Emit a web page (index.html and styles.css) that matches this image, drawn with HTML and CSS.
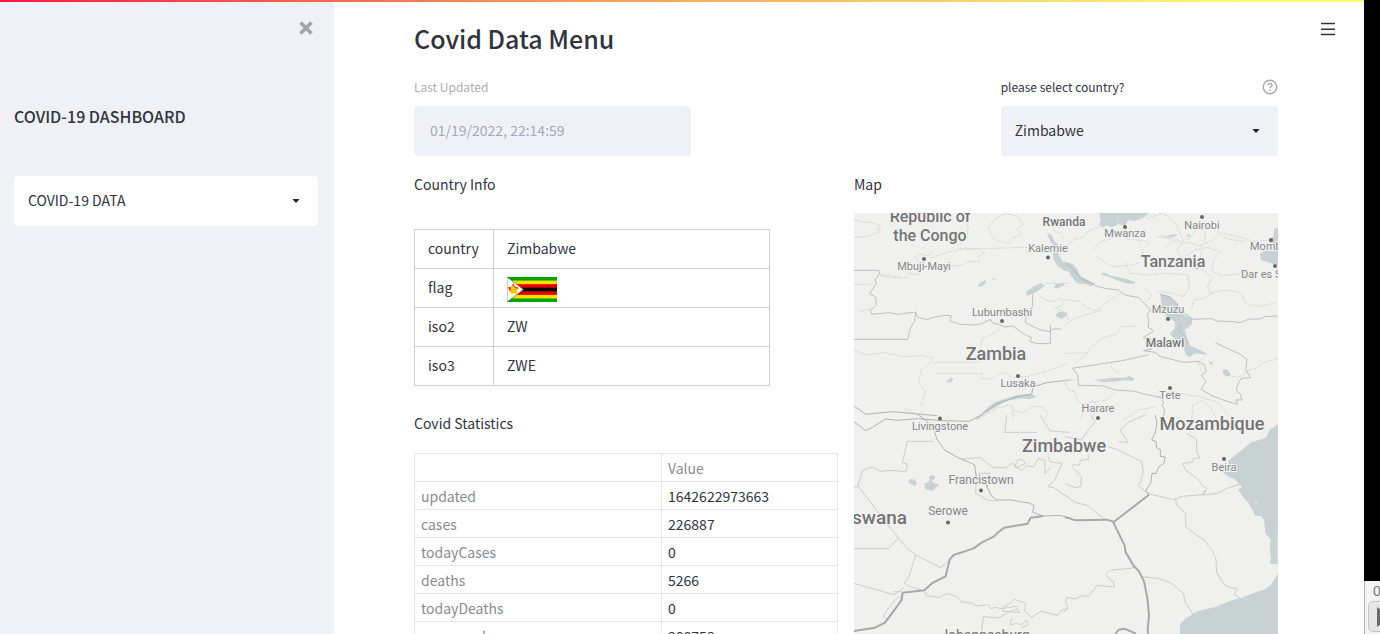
FILE: index.html
```html
<!DOCTYPE html>
<html lang="en">
<head>
<meta charset="utf-8">
<title>Covid Data Menu</title>
<link rel="stylesheet" href="styles.css">
</head>
<body>
<div class="shell">
  <div class="app">
    <div class="rainbow"></div>
    <aside class="sidebar">
      <button class="close" aria-label="Close sidebar"><svg width="14" height="14" viewBox="0 0 14 14"><path d="M1.500 1.500l11 11M12.500 1.500l-11 11" stroke="#a4a5aa" stroke-width="3.600" fill="none"/></svg></button>
      <h1 class="brand">COVID-19 DASHBOARD</h1>
      <div class="select select-light">
        <select aria-label="Dashboard page"><option>COVID-19 DATA</option></select>
        <svg class="caret" width="8" height="4" viewBox="0 0 8 4"><path d="M.5 0h7L5 3.200Q4 4 3 3.200z" fill="#262730"/></svg>
      </div>
    </aside>
    <main class="main">
      <button class="menu" aria-label="Menu"><svg width="14" height="14" viewBox="0 0 14 14"><path d="M0 1.500h14M0 7.200h14M0 12.500h14" stroke="#31333f" stroke-width="1.600"/></svg></button>
      <h2 class="title">Covid Data Menu</h2>
      <div class="fields">
        <div class="field">
          <label class="label muted" for="updated">Last Updated</label>
          <input class="input" id="updated" type="text" value="01/19/2022, 22:14:59" disabled>
        </div>
        <div class="field field-end">
          <div class="label-row">
            <label class="label" for="country">please select country?</label>
            <svg width="16" height="16" viewBox="0 0 16 16" fill="none" stroke="#a9aab0" stroke-width="1.400"><circle cx="8" cy="8" r="6.800"/><path d="M6 6.300c.2-2.400 4-2.300 4 0 0 1.500-2 1.400-2 3"/><path d="M8 10.600v1.500" stroke-width="1.500"/></svg>
          </div>
          <div class="select">
            <select id="country"><option>Zimbabwe</option></select>
            <svg class="caret" width="8" height="4" viewBox="0 0 8 4"><path d="M.5 0h7L5 3.200Q4 4 3 3.200z" fill="#262730"/></svg>
          </div>
        </div>
      </div>
      <div class="columns">
        <section>
          <p class="heading">Country Info</p>
          <table class="info">
            <tbody>
              <tr><td>country</td><td>Zimbabwe</td></tr>
              <tr><td>flag</td><td><svg class="flag" width="50" height="25" viewBox="0 0 50 25">
                <rect width="50" height="25" fill="#00a400"/><rect y="3.570" width="50" height="17.860" fill="#ffe000"/><rect y="7.140" width="50" height="10.720" fill="#e50000"/><rect y="10.700" width="50" height="3.600" fill="#000"/>
                <path d="M0 0L16.500 12.500 0 25z" fill="#fff" stroke="#555" stroke-width=".6"/>
                <path d="M6 6l2 3.500 4 1.500-3 2.400-6 1L1 10.200l4-.2z" fill="#e52020"/>
                <path d="M4 9.500l2.500-1 2 2.700h3l-1.500 2v3.300H3.500l-.2-3z" fill="#edc900"/></svg></td></tr>
              <tr><td>iso2</td><td>ZW</td></tr>
              <tr><td>iso3</td><td>ZWE</td></tr>
            </tbody>
          </table>
          <p class="heading">Covid Statistics</p>
          <table class="stats">
            <thead><tr><th></th><th>Value</th></tr></thead>
            <tbody>
              <tr><th>updated</th><td>1642622973663</td></tr>
              <tr><th>cases</th><td>226887</td></tr>
              <tr><th>todayCases</th><td>0</td></tr>
              <tr><th>deaths</th><td>5266</td></tr>
              <tr><th>todayDeaths</th><td>0</td></tr>
              <tr><th>recovered</th><td>208753</td></tr>
            </tbody>
          </table>
        </section>
        <section>
          <p class="heading">Map</p>
          <svg class="map" viewBox="0 0 424 424" role="img" aria-label="Map of southern Africa">
            <rect width="424" height="424" fill="#f0f0ef"/>
            <g transform="translate(-4 -8) scale(.33333)">
              <path class="water" d="M590 85l14 4 10 20 10 8 2 30 10 20 14 10 14 4v20l-20-4-22-15-12-20-2-20 3-20-11-15zM528 262l20-16 25-12 12 8-15 12-22 12-18 6zM612 247l8-12 22-2v8l-22 10zM615 332l12-12 22 0 2 12-16 10zM382 243l12-12 12-6 2 8-14 12zM428 220l6 0 0 5-6 0zM289 530l14-12 7 2-5 10-14 4zM410 610l25-20 28-8 40-12 40-4 16 10-20 6-30-2-40 8-35 20-28 17-10 2z"/>
              <path class="faint" d="M12 45l20 5 30 2 30 10-5 20 6 10M12 98l40-4 25-10 10-22M325 130h110l90-3h45M90 213l45 5 35 0 8-15 30 8-10-20 15-15-20-20 15-8 30 4 5-12M90 208l60 8M240 160l60-20 40-7 50-2 10 15-15 10 5 12-40 3-20 12-40-2-4 17M335 25l20 40-5 35-25 20M440 38l25-12 40 8 15 25-18 14 15 16-30 10-10 16-35-8-15-10-12-30 25-30M12 238h50M30 320l35-10M12 435l40 15 50-7 60 12 50-3 35 5-5 15-30 25-5 40 20 20-5 20-10 25M250 472h100l40-2 15-20-15-20 8-30 25-10 25-18M260 505h135l0 15 30 3 20-15 15-5 30 15 40-3 30-8 50-15 45-18M585 235h75M570 275l30 15 35-10 5 20-25 10 35 15 5 25M600 55l15 25 20 5 5 25M410 610l-30 35"/>
              <path class="faint" d="M380 645l60-35 40-10 10 15 30 8 30-20 30 4 15 18-10 15M487 600l3 45M165 610l40 20 20-20"/>
              <path class="mid" d="M12 196h75l2 10-14 18 4 12-20 30 18 10 2 25-18 15 5 12 30-3 20-2 30 5 25-4 25-2 8 15 28 7 22-8 35-5 15 2-4 15 30 10 45 2 20-4 20-10 8-2 5 10 18 4 17 8 25-3 35 25 22 10-6 10 20 8h42v-56M198 320l-5 30-12 20-7 30M12 403h163M548 268l0 33-5 14-15 22-2 16 45 22 28 5 10-8h25"/>
              <path class="strong" d="M12 603l35 25 80-8 75 7 60 5M380 640l60-43 60-22 45-8 5-22 40-12 72-8"/>
            </g>
            <g transform="translate(211 -8) scale(.33333)">
              <path class="water" d="M103 24h146l-5 10-18 8-18 6-18-3-10 18-20-6-20 10-15-6-12 7-10-8 4-12zM0 170l22 7 15 15 8 20 18 10 14 8 13 10-12 4-14-6-28-3-20-25zM110 203l10 0 20 10 30 5 40 12 0 6-20 0-35-10-18-9-25-7zM286 268l30 8 20 20 8 18 15 17 22 10 0 16-12 12-10 4 6 22 10 27 22 9 24 12 8 6-18-2-22-2-14 12-12-6-6-20-6-14-22-15-14-16 14-16 0-20-28-20-10-15zM430 468l12 4 2 8-8-2zM475 492l14 2 8 12-2 8-14 0-8-12zM88 524l30-2 22-4 40 0 12-5 18 8-8 7-26-2-30 4-35 2zM303 96l15-8 20 0-5 6-26 5zM365 92l6-6 4 4-2 6zM388 190l16-3-3 5-10 2zM640 68v112l-16-3-14-5-22-6-3-20 15-9 20-2-2-15-8-15 15-10 4-24z"/>
              <path class="faint" d="M0 125l25-20 30-10 20-20 35-10M85 135l20-25 30-8 30-20 20 20 50 5 20 5-25 25 8 15 25 12 40-3M95 155l30 20 20 10 60-5 20-10M180 170l15 35 55 5 55-5 60 4 8 40M245 40l50-15 40 35 20 45 20-5 25-35M275 95l50 5 30 10 50 12 35-15 20-20 30 15 50 8M355 110l-20 25 15 25 40-25 40-8 35 15-20 25-5 30 30 15 50-5 40 5M410 125l-5 60 35 35-15 30 20 15-30 15-30 5-5 30M430 265l50-10 50 8 10 30 40 12 50-12M370 210l5 35-20 30-30-10-50-5M0 285l40 3 25 20 30 10 35-30 40-25M0 360l30-20 30-10 50-15M30 475l35-30 15-20 40-30 30-5 20-25 45-2M0 445l75-2M160 505l-20-15 0-15M500 515l30-2 20-18 25-5 15-15 50-15M410 500l-10-28 20-20M280 575l60-10 60 10 55 15 20 20 15 25M380 645l3-45 30-15 25 25 15 30M150 560l-25 25-60 10-20 50M270 605l-50 10-45 30M240 250l20 20-15 20M290 90l65 30M160 30l-5 30M300 130l20-20M420 110v-50l40 10"/>
              <path class="mid" d="M90 242l30 8 40 5 20 15 42 8 20 22 15 15-10 12 5 20-3 20 10 5 5 8-30 18 24 4-8 15 10 15-25 5 35 5 15 12 70 18 45-3 20 12 3 20-15 10 15 18-15 24 35 20 40 15 35 10-5-13 18 0-5-17-12-12 5-20 10-16 28-2-15-25 4-30-20-15-75-35M22 490l150-23 80-18M22 490l16 20 3 31 75 2 35 12 60 4 25 8 50 10 10 15-5 8 8 15-5 30M380 343l60-2 15 7 50 2 20 3 25-10 40-2 10-6 40-2M350 355l-10 20 15 15 15 28"/>
              <path class="faint" d="M0 525h38M0 530l10 25 20 5 8 30 30 15 15-20 15 20-20 40M440 70l30 15 40 7 60 18 40-5"/>
              <path class="lakeline" d="M0 170l30 30 20 23 40 15M286 268l30 8 20 20 8 18 38 28"/>
            </g>
            <g transform="translate(-4 202) scale(.33333)">
              <path class="water" d="M175 196l8-5 12 4 6 8-6 9-10-4-8-4zM237 186l8-6 10 3 0 7-10 8 6 6 14 4 0 6-8 3-8 10-18-2-6-6-2-14 12-4 4-8zM382 10l22-10-8 0-14 5z"/>
              <path class="mid2" d="M250 79h-78l-15 63 15 6-4 22-50-4-25 3-27-13-28 10-16 50-14 0M22 210l63 82 60 77 25 30 27 21 75 38 25-20M145 369l-30 32H12M197 420l-20 65-14 20 18 10 38 12M12 505l120 34 30-22M130 530l25 0M155 540l-20 15-20 25-15 24 14 10 25-33 18-40M335 132l55-4 40 30 38 0 20-14 10 15 28-13-8-12-15 0-8 20 20 12 15-14 20 4 15-25 20 5 0 40 18-20M595 125l5 15 35 5-20 50-22 20 20 3 40 30M460 52h100M465 52l5-52M570 0l30 48 60 4M380 175l-3 60 35 20 25 3M385 175h35l-10 45M225 530l4 12 40 5 22-12 30 10 12 15 35 5 12 8 35-4 7 12 12-4 20 4 50-8M400 605l45 4 35-20 22-8 6 12-50-5 0-10 25-15 10-10 35 12-5 20 20 22 30-18 50 12 10-15 22-5M400 605l-5 42 15 8M485 610l-5 20 20-5 15 5 14-15 5 15-20 8"/>
              <path class="strong" d="M12 20l35 27 20-10 40-25 35 4 60-5 75 6 80 2 40-20M205 0l30 20 15 20 12 35 12 15 10 15 35 20 20 10 15 5 20 10 5 40 30 20 15 32 15 13 45 0 30 6 20 2 18 8-4 20 30 12 50-2 20 5"/>
              <path class="bold" d="M580 303l-38 5-9 18-70 12-22 17-10 10-35 17-25 18-60 20-12 14-12 50-40 20-24 22-65 7-3 22-50 68-30 15-65 10"/>
            </g>
            <g transform="translate(211 202) scale(.33333)">
              <path class="water" d="M640 28l-25 15-12 25-44 14-40 32-30 25 6 22-24 9 20 15 18 7 22 25-12 7 20 28 12 12 20 38 18 2 8 10 4 40 17 22-4 20 4 35-5 15 25 2v-8zM640 475l-14 20-8 15-18 12-40 14-30 12-30 8-50 20-50 12-38 22-17 18v40h295z"/>
              <path fill="#f0f0ef" d="M572 261h4v4h-4z"/>
              <path class="mid2" d="M0 240l30 22 40 10 25 22 30 22M20 150l25 0 0-14 25-3 0-15M20 155l30 30-3 30-15 3-32-12M130 95l30 10 70 35 5 30-8 30-8 12 35 25 50 12 22 5 25-10 65-5 10-18-15-10-8-15-40-30-10-20 30-5 2-10 20-3-10-20 0-35-30-18M420 225l-8 15 45-5 30-15 35-12M332 250l2 20 28 25 0 40 25 20 30 20 20 25 8 15 8 20 2 38 15 25 12 15 35 10-10 15 18 12M215 455l-20 5-60 6-12 12 10 15 12 5 3 18-52-5-25 33-20-2-20 10-25-5-5 15 8 15-15 18M230 485l50 5 40 15 35 30 5 25 25 40M50 75l20-30 20-25-12-20M0 65l50 10M160 80l30 2-25-35 25-25 50-22"/>
              <path class="strong" d="M270 0l6 20-4 30-12 25 14 5 0 18 12 6 0 20 15 2-5 20-15 10-8 20-12-1-4 30-7 10-8 15 10 7"/>
              <path class="bold" d="M252 239l-107 83 34 70 3 20 25 42 15 15 15 30 10 50 5 50-4 45 3 50M0 307l15 3 15 6 95-2 20 6M150 657l12-13 16-3 35 15"/>
            </g>
            <g class="dots">
              <circle cx="70" cy="46" r="2"/><circle cx="194" cy="44.500" r="2"/><circle cx="148" cy="108" r="2"/><circle cx="164" cy="163" r="2"/><circle cx="86" cy="205.500" r="2"/>
              <circle cx="271" cy="14" r="2"/><circle cx="348" cy="4" r="2"/><circle cx="417" cy="27" r="2"/><circle cx="421" cy="53" r="2"/><circle cx="314" cy="106" r="2"/><circle cx="316" cy="175" r="2"/><circle cx="244" cy="205" r="2"/>
              <circle cx="127" cy="277.500" r="2"/><circle cx="94" cy="309.500" r="2"/><circle cx="370" cy="246" r="2"/>
            </g>
            <g class="city">
              <text x="70" y="57">Mbuji-Mayi</text><text x="194" y="39">Kalemie</text><text x="271" y="24">Mwanza</text><text x="348" y="16">Nairobi</text><text x="396" y="37" class="start">Mombasa</text><text x="387" y="65" class="start">Dar es Salaam</text><text x="314" y="100">Mzuzu</text>
              <text x="148" y="103">Lubumbashi</text><text x="164" y="174">Lusaka</text><text x="316" y="186">Tete</text><text x="244" y="199">Harare</text><text x="86" y="217">Livingstone</text><text x="370" y="258">Beira</text>
              <text x="127" y="271" class="big">Francistown</text><text x="94" y="302" class="big">Serowe</text>
            </g>
            <g class="country">
              <text x="76" y="9" class="c16">Republic of</text><text x="76" y="28" class="c16">the Congo</text><text x="210" y="13" class="c12">Rwanda</text><text x="311" y="134" class="c12">Malawi</text>
              <text x="319" y="54" class="c16">Tanzania</text><text x="142" y="147">Zambia</text><text x="358" y="217">Mozambique</text><text x="210" y="239">Zimbabwe</text><text x="53" y="311" class="end">Botswana</text><text x="131" y="427" class="jo">Johannesburg</text>
            </g>
          </svg>
        </section>
      </div>
    </main>
  </div>
  <div class="edge">
    <div class="player"><span>0:00</span><button aria-label="Play"><svg width="14" height="20" viewBox="0 0 14 20"><path d="M0 0l14 10L0 20z" fill="#6b6b6b"/></svg></button></div>
  </div>
</div>
</body>
</html>
```
FILE: styles.css
```css
* { box-sizing: border-box; }
body { margin: 0; font-family: "Noto Sans CJK SC", "Open Sans", sans-serif; font-size: 14px; line-height: 24px; color: #31333f; background: #fff; }
button { border: 0; background: none; padding: 0; display: flex; }
.shell { display: flex; height: 100vh; overflow: hidden; }
.app { flex: 1; min-width: 0; display: grid; grid-template-columns: 334px minmax(0, 1fr); grid-template-rows: 2px minmax(0, 1fr); }
.rainbow { grid-column: 1 / -1; background: linear-gradient(90deg, #ff1744, #ff8a50 35%, #ffc966 65%, #f9ff6e 95%); }
.sidebar { background: #f0f1f6; padding: 19px 16px 0 14px; display: flex; flex-direction: column; }
.close { align-self: flex-end; margin-right: 5px; }
.brand { margin: 69px 0 48px; font-size: 16px; line-height: 24px; font-weight: 500; }
.select { display: grid; align-items: center; background: #f0f1f6; border-radius: 4px; }
.select-light { background: #fff; }
.select > * { grid-area: 1 / 1; }
.select select { appearance: none; width: 100%; height: 50px; padding: 0 14px 2px; border: 0; background: none; font: inherit; color: inherit; }
.caret { justify-self: end; margin-right: 18px; pointer-events: none; }
.main { padding: 18px 86px 0 80px; position: relative; overflow: hidden; }
.menu { position: absolute; top: 20px; right: 29px; }
.title { margin: 0; font-size: 25px; line-height: 36px; font-weight: 500; }
.fields { display: grid; grid-template-columns: repeat(3, minmax(0, 1fr)); gap: 16px; margin-top: 19px; }
.field-end { grid-column: 3; }
.label { display: block; font-size: 12px; line-height: 24px; margin-bottom: 7px; }
.muted { color: #adaeb3; }
.label-row { display: flex; justify-content: space-between; }
.label-row svg { margin-top: 4px; }
.input { display: block; width: 100%; height: 50px; padding: 0 16px 2px; border: 0; border-radius: 4px; background: #f0f1f6; color: #a5a6bb; font: inherit; }
.columns { display: grid; grid-template-columns: repeat(2, minmax(0, 1fr)); gap: 16px; margin-top: 16px; }
.heading { margin: 0; }
.map { display: block; width: 100%; margin-top: 17px; }
table { border-collapse: collapse; }
th { font-weight: 400; text-align: left; }
.info { width: 84%; margin: 33px 0 25px; }
.info td { height: 39px; padding: 0 13px 2px; border: 1px solid #cfcfd0; }
.info td:first-child { width: 79px; }
.flag { display: block; margin-top: 4px; }
.stats { width: 100%; margin-top: 18px; table-layout: fixed; }
.stats th, .stats td { height: 28px; padding: 2px 6px 1px; border: 1px solid #e6e6e8; }
.stats th { color: #8a8b92; }
.stats th:first-child { width: 58.4%; }
.edge { width: 16px; background: #000; display: flex; flex-direction: column; justify-content: flex-end; overflow: hidden; }
.player { height: 53px; border-left: 1px solid #aab4bc; background: #f2f2f2; color: #777; font-family: "Liberation Sans", sans-serif; line-height: 20px; padding-left: 3px; }
.player span { display: block; padding-left: 5px; white-space: nowrap; }
.player button { width: 32px; height: 31px; padding: 5px 8px; border: 1px solid #c4c4c4; border-radius: 5px; background: #e6e6e5; }

.map path { stroke-linejoin: round; vector-effect: non-scaling-stroke; }
.water { fill: #c9d2d3; }
.faint { fill: none; stroke: #d9dada; stroke-width: 1px; stroke-dasharray: 5 1; }
.mid { fill: none; stroke: #bebec1; stroke-width: 1px; }
.mid2 { fill: none; stroke: #cbcccc; stroke-width: 1px; }
.strong { fill: none; stroke: #b0b0b3; stroke-width: 1px; }
.bold { fill: none; stroke: #a8a8ab; stroke-width: 2px; }
.lakeline { fill: none; stroke: #aeb4b7; stroke-width: 1px; }
.dots { fill: #666; }
.map text { font-family: Roboto, sans-serif; text-anchor: middle; paint-order: stroke; stroke: #f3f3f2; stroke-width: 2px; stroke-linejoin: round; }
.city text { font-size: 11px; fill: #858585; }
.city .big { font-size: 12px; }
.country text { font-size: 18px; font-weight: 500; fill: #747474; }
.country .c16 { font-size: 16px; }
.country .c12 { font-size: 12px; }
.country .jo { font-size: 14px; font-weight: 400; }
.map .start { text-anchor: start; }
.map .end { text-anchor: end; font-size: 19px; }
```
